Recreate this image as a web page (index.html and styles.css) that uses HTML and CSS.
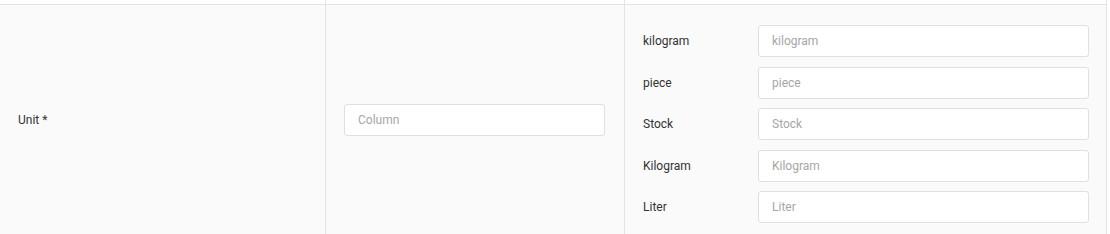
FILE: index.html
```html
<!DOCTYPE html>
<html>
	<head>
		<meta charset="utf-8">
		<title>Unit mapping</title>
		<link rel="stylesheet" href="styles.css">
	</head>
	<body>
		<div class="table">
			<div class="row head">
				<div class="cell"></div>
				<div class="cell"></div>
				<div class="cell"></div>
			</div>
			<div class="row body">
				<div class="cell name">Unit *</div>
				<div class="cell column">
					<input class="field" type="text" placeholder="Column">
				</div>
				<div class="cell values">
					<div class="item">
						<span class="label">kilogram</span>
						<input class="field" type="text" placeholder="kilogram">
					</div>
					<div class="item">
						<span class="label">piece</span>
						<input class="field" type="text" placeholder="piece">
					</div>
					<div class="item">
						<span class="label">Stock</span>
						<input class="field" type="text" placeholder="Stock">
					</div>
					<div class="item">
						<span class="label">Kilogram</span>
						<input class="field" type="text" placeholder="Kilogram">
					</div>
					<div class="item">
						<span class="label">Liter</span>
						<input class="field" type="text" placeholder="Liter">
					</div>
				</div>
			</div>
		</div>
	</body>
</html>
```

FILE: styles.css
```css
* {
	margin: 0;
	padding: 0;
	box-sizing: border-box;
}

body {
	background-color: #fff;
	font-family: Roboto, "Liberation Sans", sans-serif;
	font-size: 12px;
	color: #333;
}

.table {
	width: 1107px;
}

.row {
	display: grid;
	grid-template-columns: 326px 299px 482px;
	border-bottom: 1px solid #e3e3e3;
}

.head {
	height: 5px;
}

.body {
	background-color: #fafafa;
}

.cell {
	border-right: 1px solid #e3e3e3;
}

.name {
	display: flex;
	align-items: center;
	padding-left: 18px;
}

.column {
	display: flex;
	align-items: center;
	padding: 0 19px 0 18px;
}

.values {
	display: flex;
	flex-direction: column;
	gap: 9.5px;
	padding: 20px 17px 11px 18px;
}

.item {
	display: flex;
	align-items: center;
}

.label {
	width: 115px;
}

.field {
	flex: 1;
	width: 100%;
	height: 32px;
	padding: 0 13px;
	border: 1px solid #e0e0e0;
	border-radius: 3px;
	background-color: #fff;
	font-family: inherit;
	font-size: 12px;
	color: #333;
	outline: none;
}

.field::placeholder {
	color: #a6a6a6;
}
```
